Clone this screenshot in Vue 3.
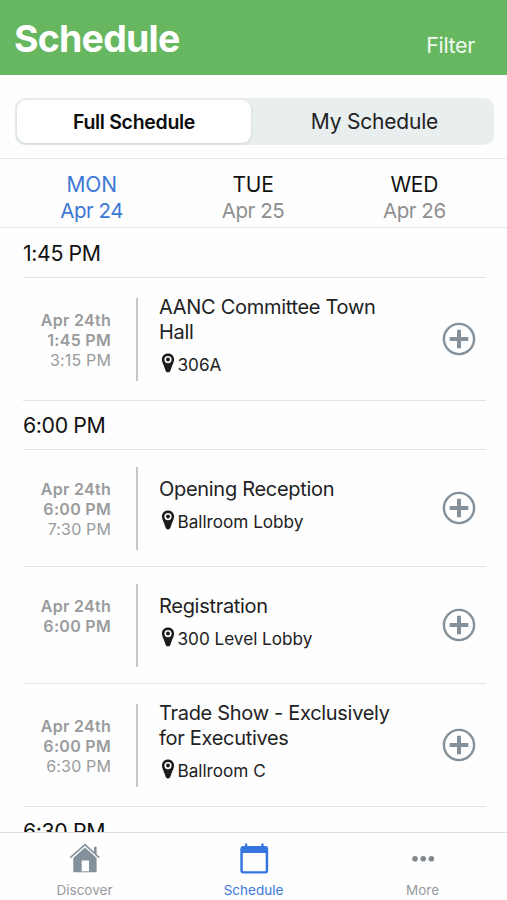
<script setup>
const days = [
  { name: 'MON', date: 'Apr 24', active: true },
  { name: 'TUE', date: 'Apr 25' },
  { name: 'WED', date: 'Apr 26' },
]

const groups = [
  {
    time: '1:45 PM',
    items: [
      { start: '1:45 PM', end: '3:15 PM', title: ['AANC Committee Town', 'Hall'], place: '306A' },
    ],
  },
  {
    time: '6:00 PM',
    items: [
      { start: '6:00 PM', end: '7:30 PM', title: ['Opening Reception'], place: 'Ballroom Lobby' },
      { start: '6:00 PM', end: '', title: ['Registration'], place: '300 Level Lobby' },
      { start: '6:00 PM', end: '6:30 PM', title: ['Trade Show - Exclusively', 'for Executives'], place: 'Ballroom C' },
    ],
  },
  { time: '6:30 PM', items: [] },
]
</script>

<template>
  <div class="screen">
    <header class="top">
      <h1>Schedule</h1>
      <span class="filter">Filter</span>
    </header>

    <div class="segment-wrap">
      <div class="segment">
        <div class="seg on">Full Schedule</div>
        <div class="seg">My Schedule</div>
      </div>
    </div>

    <nav class="days">
      <div v-for="d in days" :key="d.name" class="day" :class="{ active: d.active }">
        <span class="name">{{ d.name }}</span>
        <span class="date">{{ d.date }}</span>
      </div>
    </nav>

    <main class="list">
      <section v-for="g in groups" :key="g.time">
        <h2><span>{{ g.time }}</span></h2>
        <article v-for="(it, i) in g.items" :key="i" :class="{ tall: it.title.length > 1 }">
          <div class="when">
            <b>Apr 24th</b>
            <b>{{ it.start }}</b>
            <span>{{ it.end }}</span>
          </div>
          <div class="bar"></div>
          <div class="info">
            <div v-for="line in it.title" :key="line" class="title"><span>{{ line }}</span></div>
            <div class="place">
              <svg class="pin" viewBox="0 0 14 20" width="14" height="20">
                <path fill="#1c1c1e" fill-rule="evenodd" d="M7 0.5C3.4 0.5 0.9 3.1 0.9 6.5C0.9 9.4 3 12.4 4.1 16.2C4.7 18.4 5.7 19.5 7 19.5S9.3 18.4 9.9 16.2C11 12.4 13.1 9.4 13.1 6.5C13.1 3.1 10.6 0.5 7 0.5ZM7 3A3.6 3.6 0 1 1 7 10.2A3.6 3.6 0 1 1 7 3Z" />
                <circle cx="7" cy="6.6" r="2" fill="#1c1c1e" />
              </svg>
              <span>{{ it.place }}</span>
            </div>
          </div>
          <svg class="add" viewBox="0 0 34 34" width="34" height="34">
            <circle cx="17" cy="17" r="15.1" fill="none" stroke="#84919a" stroke-width="2.4" />
            <path d="M17 7.7V26.3M7.7 17H26.3" stroke="#84919a" stroke-width="4" />
          </svg>
        </article>
      </section>
    </main>

    <footer class="tabs">
      <div class="tab">
        <svg class="home" viewBox="0 0 32 32" width="32" height="32">
          <path d="M2.3 14.6L17 1.6L31.2 14.6" fill="none" stroke="#84919a" stroke-width="1.5" />
          <path d="M26 3.8H28.6V11.5L26 9Z" fill="#84919a" />
          <path d="M17 4.5L28.6 15V29.3H21V17.5H13.7V29.3H5.3V15Z" fill="#84919a" />
          <path d="M13.7 28.8H21" stroke="#84919a" stroke-width="1" />
        </svg>
        <span>Discover</span>
      </div>
      <div class="tab current">
        <svg viewBox="0 0 32 32" width="32" height="32">
          <path fill="#3576e0" fill-rule="evenodd" d="M7 0.5H9.2V3H23.3V0.5H25.6V3H27.3A3 3 0 0 1 30.2 6V27.6A3 3 0 0 1 27.3 30.5H5.2A3 3 0 0 1 2.3 27.6V6A3 3 0 0 1 5.2 3H7ZM4.8 10V27.2A1 1 0 0 0 5.8 28.2H26.7A1 1 0 0 0 27.7 27.2V10Z" />
        </svg>
        <span>Schedule</span>
      </div>
      <div class="tab">
        <svg viewBox="0 0 32 32" width="32" height="32">
          <g fill="#84898e">
            <circle cx="8" cy="15.8" r="2.8" />
            <circle cx="16.2" cy="15.8" r="2.8" />
            <circle cx="24.4" cy="15.8" r="2.8" />
          </g>
        </svg>
        <span>More</span>
      </div>
    </footer>
  </div>
</template>

<style>
body {
  background: #fefefe;
}
</style>

<style scoped>
.screen {
  width: 507px;
  height: 900px;
  display: flex;
  flex-direction: column;
  overflow: hidden;
  background: #fefefe;
  color: #222224;
  font-family: Inter, "Liberation Sans", sans-serif;
}
.top {
  flex: none;
  height: 75px;
  box-sizing: border-box;
  padding: 15px 32px 0 14px;
  display: flex;
  justify-content: space-between;
  background: #66b75f;
  color: #fff;
}
h1 {
  margin: 0;
  font-size: 37.5px;
  line-height: 48px;
  font-weight: 700;
  letter-spacing: -0.78px;
}
.filter {
  padding-top: 17px;
  font-size: 21.5px;
  line-height: 26px;
  letter-spacing: -0.35px;
  color: #f0faef;
}
.segment-wrap {
  flex: none;
  height: 83px;
  box-sizing: border-box;
  padding: 23px 13px 0 15px;
}
.segment {
  height: 47px;
  box-sizing: border-box;
  padding: 2px;
  display: grid;
  grid-template-columns: 234px 1fr;
  border-radius: 10px;
  background: #e9eeef;
}
.seg {
  display: flex;
  align-items: center;
  justify-content: center;
  padding-left: 6px;
  font-size: 21px;
  letter-spacing: -0.2px;
}
.seg.on {
  padding-left: 0;
  border-radius: 9px;
  background: #fff;
  box-shadow: 0 1px 3px rgba(0, 0, 0, 0.12);
  color: #0c0c0d;
  font-size: 19.5px;
  font-weight: 600;
  letter-spacing: -0.3px;
}
.days {
  flex: none;
  height: 70px;
  box-sizing: border-box;
  padding: 13px 12px 0 11px;
  display: grid;
  grid-template-columns: repeat(3, 1fr);
  border-top: 1px solid #e6e7e7;
  border-bottom: 1px solid #e2e5e5;
}
.day {
  display: flex;
  flex-direction: column;
  align-items: center;
  font-size: 21px;
  line-height: 26px;
}
.name {
  color: #111;
  letter-spacing: -0.2px;
}
.date {
  color: #8f8f8f;
  font-size: 20.5px;
  letter-spacing: -0.45px;
}
.active .name,
.active .date {
  color: #3c78d4;
}
.list {
  flex: 1;
  min-height: 0;
  overflow: hidden;
  padding: 1px 21px 0 23px;
}
h2 {
  margin: 0;
  height: 49px;
  box-sizing: border-box;
  border-bottom: 1px solid #e2e4e4;
  font-size: 21.3px;
  line-height: 49px;
  font-weight: 400;
  letter-spacing: -0.38px;
  color: #111;
}
article {
  height: 117px;
  box-sizing: border-box;
  border-bottom: 1px solid #e2e4e4;
  display: flex;
  align-items: center;
}
article.tall {
  height: 123px;
}
.when {
  width: 88px;
  height: 59px;
  display: flex;
  flex-direction: column;
  text-align: right;
  font-size: 16px;
  line-height: 20px;
  color: #999b9d;
}
.when b {
  font-weight: 600;
  letter-spacing: 0.3px;
}
.when span {
  letter-spacing: 0.15px;
}
.bar {
  width: 2px;
  height: 83px;
  margin: 0 21.5px 0 24.5px;
  background: #c6c7c8;
}
.info {
  flex: 1;
  padding-bottom: 6px;
}
.tall .info {
  padding-bottom: 7px;
}
.title {
  font-size: 20px;
  line-height: 25px;
  letter-spacing: -0.3px;
  white-space: nowrap;
}
.place {
  display: flex;
  align-items: center;
  gap: 3px;
  margin-top: 8px;
  padding-left: 2px;
  font-size: 17.2px;
  line-height: 24px;
  letter-spacing: -0.03px;
}
.pin {
  margin: -4px 0 0 -0.5px;
}
.add {
  flex: none;
  margin-right: 10px;
}
.tabs {
  flex: none;
  height: 68px;
  box-sizing: border-box;
  padding-top: 10px;
  border-top: 1px solid #dcdfe0;
  display: grid;
  grid-template-columns: repeat(3, 1fr);
}
.tab {
  display: flex;
  flex-direction: column;
  align-items: center;
  gap: 6px;
  font-size: 13.5px;
  line-height: 18px;
  color: #989b9e;
}
.home {
  margin-left: -2px;
}
.current {
  color: #3c78d8;
}
</style>
